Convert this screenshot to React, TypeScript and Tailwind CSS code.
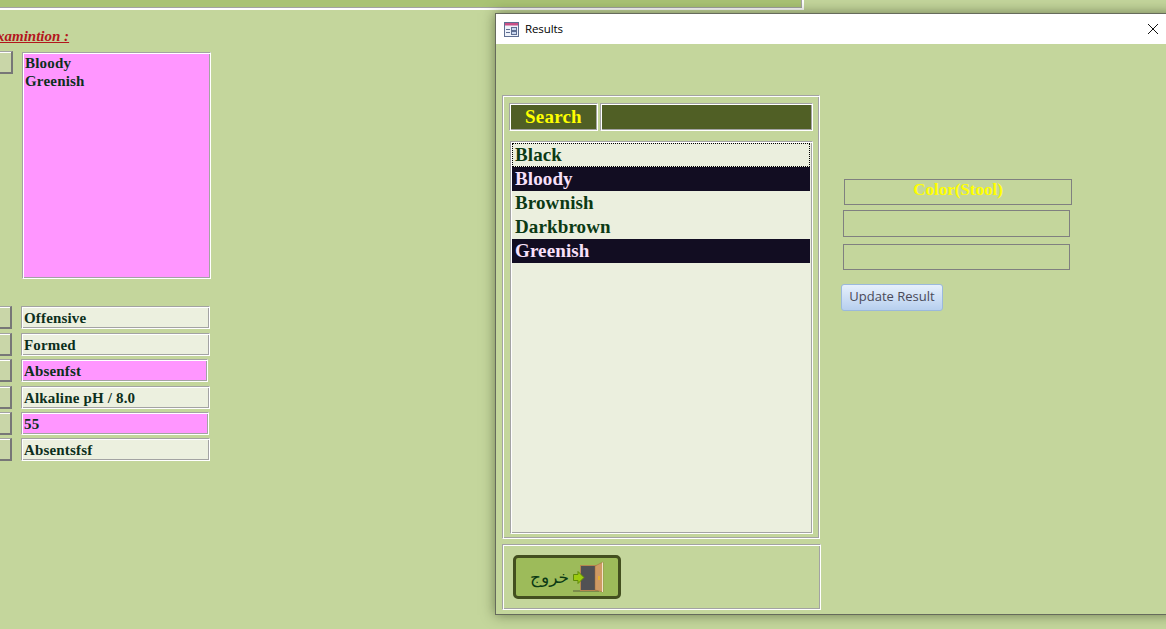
const etched = "border border-t-[#a3a3a3] border-l-[#a3a3a3] border-r-white border-b-white shadow-[inset_1px_1px_0_#ffffff,inset_-1px_-1px_0_#a3a3a3]";

const rows = [
  { text: "Offensive", box: "mt-[27px]", field: "w-[189px] bg-[#ecf0df]" },
  { text: "Formed", box: "mt-[4px]", field: "w-[189px] bg-[#ecf0df]" },
  { text: "Absenfst", box: "mt-[3px]", field: "w-[187px] bg-[#ff96ff]" },
  { text: "Alkaline pH / 8.0", box: "mt-[4px]", field: "w-[189px] bg-[#ecf0df]" },
  { text: "55", box: "mt-[3px]", field: "w-[188px] ml-[1px] bg-[#ff96ff]" },
  { text: "Absentsfsf", box: "mt-[3px]", field: "w-[189px] bg-[#ecf0df]" },
];

const items = [
  { text: "Black", sel: false, focus: true },
  { text: "Bloody", sel: true },
  { text: "Brownish", sel: false },
  { text: "Darkbrown", sel: false },
  { text: "Greenish", sel: true },
];

function SideButton({ w }: { w: string }) {
  return (
    <div className={`${w} h-[23px] shrink-0 bg-[#c9d6a8] border-t border-t-[#a3a3a3] border-r-2 border-r-[#777777] border-b-2 border-b-[#777777] shadow-[inset_0_1px_0_#ffffff]`} />
  );
}

function FormIcon() {
  return (
    <svg width="15" height="15" viewBox="0 0 15 15" className="shrink-0">
      <rect x="0.5" y="0.5" width="14" height="14" fill="#eef2fa" stroke="#5f6f92" />
      <rect x="1" y="1" width="13" height="2.5" fill="#c94f85" />
      <path d="M2 7.5h4M2 10.5h4" stroke="#5f6f92" strokeWidth="1" />
      <rect x="7.5" y="5.5" width="5" height="3" fill="#c9d6ee" stroke="#5f6f92" />
      <rect x="7.5" y="9.5" width="5" height="3" fill="#c9d6ee" stroke="#5f6f92" />
    </svg>
  );
}

function DoorIcon() {
  return (
    <svg width="32" height="33" viewBox="0 0 32 33" className="shrink-0">
      <path d="M0 30h26" stroke="#5a5f3a" strokeWidth="1" />
      <rect x="7.5" y="4.5" width="16" height="25" fill="#515154" stroke="#b5854f" />
      <path d="M22 5 L30 1 V31 L22 29 Z" fill="#cf9a64" stroke="#9b6a3a" strokeWidth="0.5" />
      <path d="M29 2 L30 1 V31 L29 31 Z" fill="#f2e2c8" />
      <rect x="25" y="15" width="2" height="4" fill="#e8b030" />
      <path d="M0.5 13.5 H5 V10.5 L11 16.5 L5 22.5 V19.5 H0.5 Z" fill="#9ccb10" stroke="#5f8a08" strokeWidth="1" />
    </svg>
  );
}

export default function App() {
  return (
    <div className="relative w-[1166px] h-[629px] overflow-hidden bg-[#c4d69c] font-['Liberation_Serif',serif]">
      <div className="w-[804px] h-[10px] bg-[#a9c374] border-b-2 border-r-2 border-b-white border-r-white shadow-[inset_0_-1px_0_#a3a3a3,inset_-1px_0_0_#a3a3a3]" />

      <div className="mt-[17px] ml-[-13px] text-[15px] leading-[18px] font-bold italic underline text-[#b3161c]">
        Examintion :
      </div>

      <div className="flex mt-[6px]">
        <SideButton w="w-[13px]" />
        <div className={`ml-[9px] mt-[1px] w-[189px] h-[227px] bg-[#ff96ff] pl-[2px] pt-[1px] text-[15px] leading-[18px] font-bold tracking-[0.2px] text-[#0c2f1c] ${etched}`}>
          <div>Bloody</div>
          <div>Greenish</div>
        </div>
      </div>

      {rows.map((r) => (
        <div key={r.text} className={`flex ${r.box}`}>
          <SideButton w="w-[12px]" />
          <div className={`ml-[9px] h-[23px] pl-[2px] text-[15px] leading-[22px] font-bold tracking-[0.17px] text-[#0c2f1c] ${r.field} ${etched}`}>
            {r.text}
          </div>
        </div>
      ))}

      <div className="absolute left-[495px] top-[13px] w-[680px] h-[602px] bg-[#c4d69c] border border-[#666b5c] shadow-[0_0_12px_rgba(40,50,20,0.55)]">
        <div className="h-[30px] bg-white flex items-center pl-[8px] font-['Open_Sans',sans-serif] text-[11.5px] text-black">
          <FormIcon />
          <span className="ml-[6px] tracking-[-0.1px]">Results</span>
          <svg width="12" height="12" viewBox="0 0 12 12" className="ml-[584px] shrink-0">
            <path d="M1 1 L11 11 M11 1 L1 11" stroke="#111111" strokeWidth="1" fill="none" />
          </svg>
        </div>

        <div className="flex">
          <div className="pl-[6px] pt-[51px]">
            <div className={`w-[318px] h-[444px] pl-[6px] pt-[7px] ${etched}`}>
              <div className="flex">
                <div className={`w-[89px] h-[28px] bg-[#505f25] text-center text-[19px] leading-[26px] font-bold tracking-[0.2px] text-[#ffff00] ${etched}`}>
                  Search
                </div>
                <div className={`ml-[2px] w-[213px] h-[28px] bg-[#505f25] ${etched}`} />
              </div>
              <div className={`mt-[10px] ml-[1px] w-[303px] h-[393px] bg-[#ebefde] pt-[1px] pl-[1px] pr-[2px] ${etched}`}>
                {items.map((it) => (
                  <div
                    key={it.text}
                    className={`h-[24px] pl-[3px] text-[19px] leading-[23px] font-bold tracking-[0.12px] ${
                      it.sel ? "bg-[#120d22] text-[#f8e0fa]" : "text-[#0b3a14]"
                    } ${it.focus ? "outline-1 outline-dotted -outline-offset-1 outline-black" : ""}`}
                  >
                    {it.text}
                  </div>
                ))}
              </div>
            </div>

            <div className={`mt-[5px] w-[319px] h-[66px] pl-[10px] pt-[10px] ${etched}`}>
              <div className="w-[108px] h-[44px] bg-[#9dbb5a] border-[3px] border-[#434f1f] rounded-[5px] flex items-center pl-[14px]">
                <span className="font-['DejaVu_Sans',sans-serif] text-[17px] leading-none text-[#0b3a14]" dir="rtl">خروج</span>
                <span className="ml-[4px]"><DoorIcon /></span>
              </div>
            </div>
          </div>

          <div className="ml-[20px] pt-[135px]">
            <div className="ml-[3px] w-[228px] h-[26px] border border-[#808080] text-center text-[17px] leading-[20px] font-bold text-[#ffff00]">
              Color(Stool)
            </div>
            <div className="mt-[5px] ml-[2px] w-[227px] h-[27px] border border-[#808080]" />
            <div className="mt-[7px] ml-[2px] w-[227px] h-[26px] border border-[#808080]" />
            <div className="mt-[14px] w-[102px] h-[27px] rounded-[3px] border border-[#9bb9dc] bg-gradient-to-b from-[#e6f0fc] to-[#b7cfee] text-center font-['Open_Sans',sans-serif] text-[13px] leading-[22px] text-[#4a4a58]">
              Update Result
            </div>
          </div>
        </div>
      </div>
    </div>
  );
}
